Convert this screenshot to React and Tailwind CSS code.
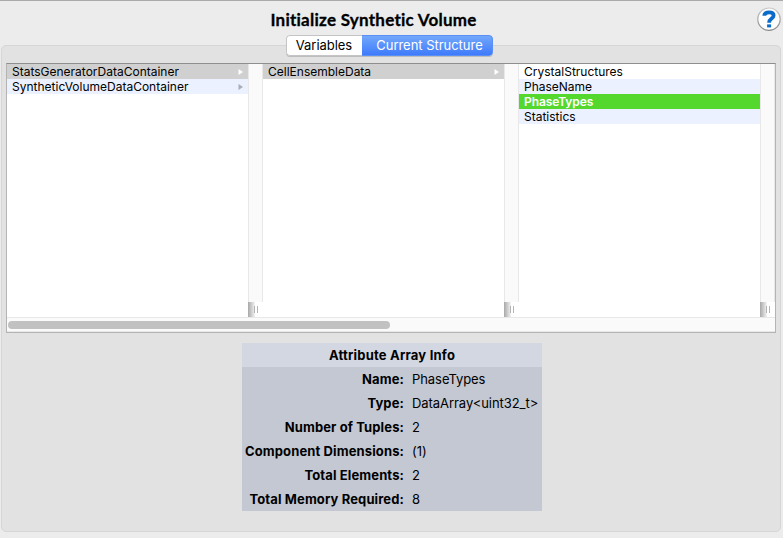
const columns = [
  {
    rows: [
      { label: "StatsGeneratorDataContainer", arrow: true, cls: "bg-[#d0d0d0]", tri: "#ffffff" },
      { label: "SyntheticVolumeDataContainer", arrow: true, cls: "bg-[#ebf1fe]", tri: "#a9adb5" },
    ],
  },
  { rows: [{ label: "CellEnsembleData", arrow: true, cls: "bg-[#d0d0d0]", tri: "#ffffff" }] },
  {
    rows: [
      { label: "CrystalStructures", cls: "bg-white" },
      { label: "PhaseName", cls: "bg-[#ebf1fe]" },
      { label: "PhaseTypes", cls: "bg-[#55d82d] text-white font-semibold tracking-[-0.1px]" },
      { label: "Statistics", cls: "bg-[#ebf1fe]" },
    ],
  },
];

const info = [
  ["Name:", "PhaseTypes"],
  ["Type:", "DataArray<uint32_t>"],
  ["Number of Tuples:", "2"],
  ["Component Dimensions:", "(1)"],
  ["Total Elements:", "2"],
  ["Total Memory Required:", "8"],
];

function Row({ row }) {
  return (
    <div className={`flex h-[15px] items-center justify-between px-[5px] text-[12px] leading-[15px] ${row.cls}`}>
      <span className="whitespace-nowrap">{row.label}</span>
      {row.arrow && (
        <svg width="5" height="6" viewBox="0 0 5 6">
          <path d="M0.5 0L5 3L0.5 6Z" fill={row.tri} />
        </svg>
      )}
    </div>
  );
}

function Column({ column }) {
  return (
    <div className="flex w-[256px] shrink-0">
      <div className="w-[241px] bg-white">
        {column.rows.map((row) => (
          <Row key={row.label} row={row} />
        ))}
      </div>
      <div className="flex w-[15px] flex-col">
        <div className="flex-1 border-x border-[#e8e8e8] bg-[#fafafa]" />
        <div className="flex h-[15px] items-center bg-white">
          <div className="h-full w-[7px] bg-linear-to-r from-[#a8a8a8] to-[#f4f4f4]" />
          <div className="-ml-px h-[7px] w-px bg-[#b4b4b4]" />
          <div className="ml-[2px] h-[7px] w-px bg-[#b4b4b4]" />
        </div>
      </div>
    </div>
  );
}

function HelpButton() {
  return (
    <svg className="absolute left-[757px] top-[6px]" width="25" height="25" viewBox="0 0 25 25">
      <defs>
        <linearGradient id="rim" x1="0" y1="0" x2="0" y2="1">
          <stop offset="0" stopColor="#c9c9c9" />
          <stop offset="1" stopColor="#8c8c8c" />
        </linearGradient>
      </defs>
      <circle cx="12" cy="12.2" r="11.2" fill="#fdfdfd" stroke="url(#rim)" strokeWidth="1.2" />
      <path d="M7.3 8.8C7.3 6.2 9.3 5.4 12 5.4C15 5.4 16.6 6.4 16.6 8.5C16.6 11.8 12.1 11.4 12.1 15.8" fill="none" stroke="#0b6bc9" strokeWidth="3.8" />
      <path d="M10.1 17.4H14.1V20.4H10.1Z" fill="#0b6bc9" />
    </svg>
  );
}

export default function App() {
  return (
    <div className="relative flex h-[538px] w-[783px] flex-col overflow-hidden border-t border-[#aaaaaa] bg-[#ececec] font-['Inter',sans-serif] text-black">
      <h1 className="flex h-[34px] items-center justify-center pr-[36px] pt-[4px] font-['Lato',sans-serif] text-[17px] font-bold leading-[20px] tracking-[0.25px] [-webkit-text-stroke:0.3px_black]">
        <span className="whitespace-nowrap">Initialize Synthetic Volume</span>
      </h1>
      <HelpButton />
      <div className="relative z-10 ml-[286px] flex h-[21px] w-[207px] shrink-0 overflow-hidden rounded-[4px] text-[13px] leading-[19px] shadow-[0_1px_0_#bdbdbd]">
        <div className="flex w-[76px] justify-center rounded-l-[4px] border border-r-0 border-[#c4c4c4] bg-white pr-px tracking-[-0.05px]">
          <span>Variables</span>
        </div>
        <div className="flex w-[131px] justify-center rounded-r-[4px] border border-l-0 border-[#5a8ff5] bg-linear-to-b from-[#72a7fa] to-[#3f7afb] pl-[5px] tracking-[-0.03px] text-white">
          <span className="whitespace-nowrap">Current Structure</span>
        </div>
      </div>
      <div className="-mt-[11px] ml-px flex h-[487px] w-[780px] shrink-0 flex-col items-center rounded-[5px] border border-[#d6d6d6] bg-[#e2e2e2] pt-[17px]">
        <div className="flex h-[270px] w-[770px] shrink-0 flex-col border border-t-[#8e8e8e] border-[#b4b4b4] bg-white">
          <div className="flex h-[253px]">
            {columns.map((column, i) => (
              <Column key={i} column={column} />
            ))}
          </div>
          <div className="h-[15px] border-y border-[#e8e8e8] bg-[#fafafa] pl-px pt-[3px]">
            <div className="h-[8px] w-[382px] rounded-full bg-[#c1c1c1]" />
          </div>
        </div>
        <div className="ml-[240px] mt-[10px] w-[300px] shrink-0 self-start bg-[#c3c8d2] text-[13px] leading-[24px]">
          <div className="h-[24px] bg-[#d2d7e1] text-center font-bold tracking-[0.2px]">Attribute Array Info</div>
          {info.map(([name, value]) => (
            <div key={name} className="flex h-[24px]">
              <div className="w-[162px] shrink-0 whitespace-nowrap text-right font-bold tracking-[0.12px]">{name}</div>
              <div className="ml-[8px] whitespace-nowrap tracking-[-0.06px]">{value}</div>
            </div>
          ))}
        </div>
      </div>
    </div>
  );
}
